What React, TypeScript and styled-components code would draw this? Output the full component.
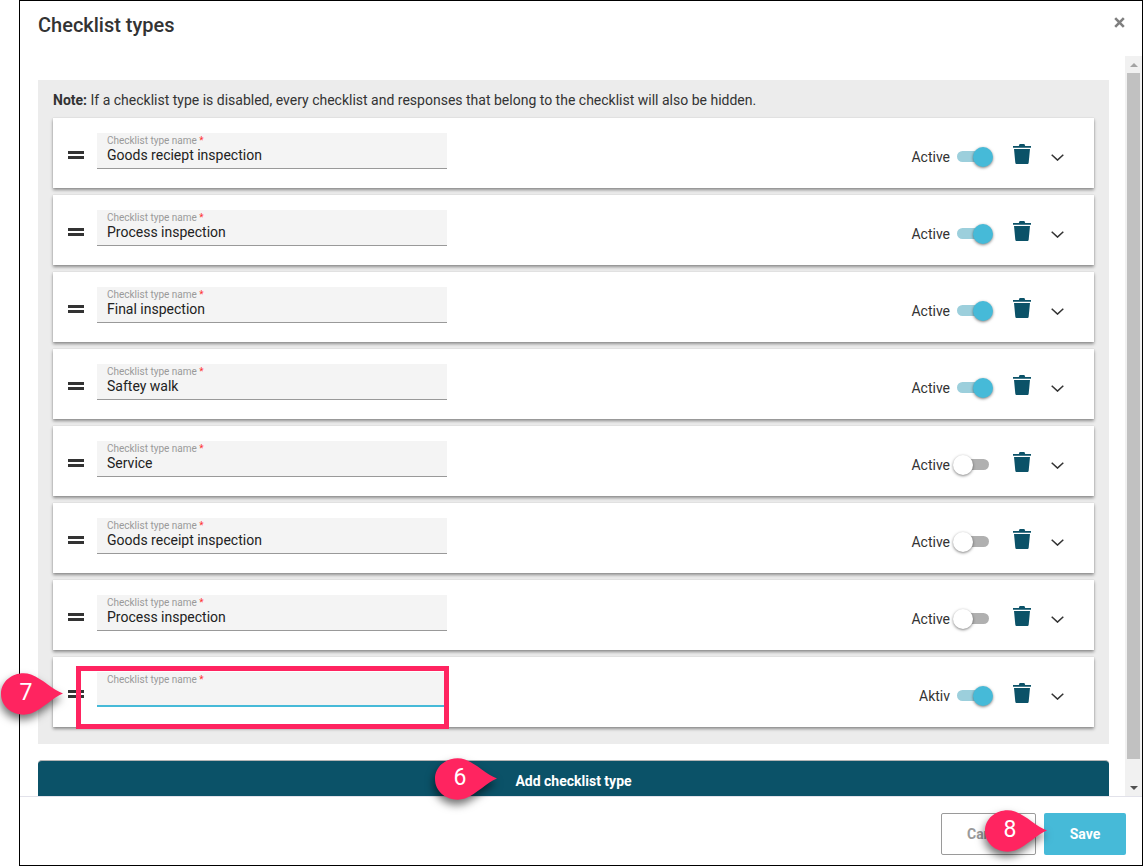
import React from "react";
import styled, { createGlobalStyle } from "styled-components";

const Global = createGlobalStyle`
  html, body { margin: 0; padding: 0; background: #fff; }
  body { font-family: Roboto, "Liberation Sans", sans-serif; color: #333; }
  * { box-sizing: border-box; }
`;

const Page = styled.div`
  position: relative;
  width: 1144px;
  height: 866px;
  padding-left: 19px;
  padding-right: 1px;
  overflow: hidden;
`;

const Modal = styled.div`
  width: 1124px;
  height: 866px;
  border: 1px solid #000;
  background: #fff;
  display: flex;
  flex-direction: column;
`;

const Header = styled.header`
  height: 55px;
  flex: none;
  display: flex;
  justify-content: space-between;
  padding: 11px 17px 0 18px;
`;

const Title = styled.h2`
  margin: 0;
  font-size: 20px;
  line-height: 26px;
  font-weight: 500;
  color: #333;
`;

const CloseButton = styled.button`
  width: 11px;
  height: 11px;
  margin-top: 5px;
  padding: 0;
  border: 0;
  background: none;
  display: flex;
`;

const Middle = styled.div`
  height: 740px;
  flex: none;
  display: flex;
  overflow: hidden;
`;

const Content = styled.main`
  width: 1105px;
  flex: none;
  padding: 24px 16px 0 18px;
`;

const Panel = styled.section`
  background: #ececec;
  padding: 12px 15px 17px;
`;

const Note = styled.p`
  margin: 0 0 9px;
  font-size: 14px;
  line-height: 17px;
  color: #333;
  b { font-weight: 700; }
`;

const List = styled.div`
  display: flex;
  flex-direction: column;
  gap: 7px;
`;

const Card = styled.article`
  height: 70px;
  background: #fff;
  box-shadow: 0 2px 3px rgba(0, 0, 0, 0.4), 0 0 1px rgba(0, 0, 0, 0.15);
  display: flex;
  padding: 15px 30px 0 15px;
`;

const Drag = styled.div`
  width: 16px;
  height: 8px;
  margin: 18px 13px 0 0;
  flex: none;
  border-top: 3px solid #333;
  border-bottom: 3px solid #333;
`;

const Field = styled.div<{ $focused?: boolean }>`
  width: 350px;
  height: ${(p) => (p.$focused ? "35px" : "36px")};
  padding: 3px 10px 0;
  background: #f4f4f4;
  border-bottom: ${(p) => (p.$focused ? "2px solid #46bad8" : "1px solid #999")};
`;

const FieldLabel = styled.div`
  font-size: 10px;
  line-height: 10px;
  color: #9a9a9a;
  span { color: #f33; }
`;

const FieldValue = styled.div`
  font-size: 14px;
  line-height: 18px;
  color: #222;
`;

const Actions = styled.div`
  margin-left: auto;
  height: 36px;
  display: flex;
  align-items: center;
  padding-top: 12px;
`;

const ActiveLabel = styled.span`
  font-size: 14px;
  color: #333;
  margin-right: 7px;
`;

const Toggle = styled.div<{ $on: boolean }>`
  position: relative;
  width: 32px;
  height: 11px;
  border-radius: 6px;
  margin-top: -2px;
  background: ${(p) => (p.$on ? "#9ccfdc" : "#b0b0b0")};
  &::after {
    content: "";
    position: absolute;
    top: -4px;
    left: ${(p) => (p.$on ? "16px" : "-4px")};
    width: 20px;
    height: 20px;
    border-radius: 50%;
    background: ${(p) => (p.$on ? "#46bad8" : "#fff")};
    box-shadow: 0 1px 3px rgba(0, 0, 0, 0.5);
  }
`;

const Trash = styled.svg`
  width: 18px;
  height: 20px;
  margin: -6px 0 0 24px;
`;

const Chevron = styled.svg`
  width: 13px;
  height: 7px;
  margin: 0 0 0 20px;
`;

const AddButton = styled.button`
  display: block;
  width: 100%;
  height: 41px;
  margin-top: 16px;
  border: 0;
  border-top: 1px solid #b5b5b5;
  border-radius: 4px;
  background: #0b5268;
  color: #fff;
  font: 700 14px Roboto, "Liberation Sans", sans-serif;
`;

const Scrollbar = styled.div`
  width: 17px;
  flex: none;
  background: #f1f1f1;
  display: flex;
  flex-direction: column;
  align-items: center;
`;

const ScrollArrow = styled.div<{ $up?: boolean }>`
  height: 17px;
  flex: none;
  display: flex;
  align-items: center;
  justify-content: center;
  &::before {
    content: "";
    border-left: 4px solid transparent;
    border-right: 4px solid transparent;
    ${(p) => (p.$up ? "border-bottom: 4px solid #a3a3a3;" : "border-top: 4px solid #505050;")}
  }
`;

const ScrollThumb = styled.div`
  width: 13px;
  height: 686px;
  background: #c1c1c1;
  margin-bottom: 20px;
`;

const Footer = styled.footer`
  flex: 1;
  border-top: 1px solid #e2e2ea;
  background: #fff;
  display: flex;
  justify-content: flex-end;
  gap: 8px;
  padding: 16px 16px 0 0;
`;

const FooterButton = styled.button<{ $primary?: boolean }>`
  width: ${(p) => (p.$primary ? "82px" : "95px")};
  height: 42px;
  border-radius: 2px;
  border: ${(p) => (p.$primary ? "0" : "1px solid #9a9a9a")};
  background: ${(p) => (p.$primary ? "#46bad8" : "#fff")};
  color: ${(p) => (p.$primary ? "#fff" : "#9a9a9a")};
  font: 700 14px Roboto, "Liberation Sans", sans-serif;
`;

const Highlight = styled.div`
  position: absolute;
  left: 76px;
  top: 666px;
  width: 373px;
  height: 63px;
  border: 5px solid #ff2460;
`;

const Callout = styled.div<{ $x: number; $y: number }>`
  position: absolute;
  left: ${(p) => p.$x}px;
  top: ${(p) => p.$y}px;
  width: 63px;
  height: 42px;
  svg {
    display: block;
    overflow: visible;
    filter: drop-shadow(-1px 5px 4px rgba(0, 0, 0, 0.55));
  }
`;

const CalloutNumber = styled.span`
  position: absolute;
  left: 15px;
  top: 0;
  width: 20px;
  text-align: center;
  color: #fff;
  font-size: 23px;
  line-height: 40px;
`;

const rows = [
  { name: "Goods reciept inspection", on: true, label: "Active" },
  { name: "Process inspection", on: true, label: "Active" },
  { name: "Final inspection", on: true, label: "Active" },
  { name: "Saftey walk", on: true, label: "Active" },
  { name: "Service", on: false, label: "Active" },
  { name: "Goods receipt inspection", on: false, label: "Active" },
  { name: "Process inspection", on: false, label: "Active" },
  { name: "", on: true, label: "Aktiv", focused: true },
];

const callouts = [
  { n: 7, x: 1, y: 673 },
  { n: 6, x: 435, y: 758 },
  { n: 8, x: 985, y: 810 },
];

export default function App() {
  return (
    <Page>
      <Global />
      <Modal>
        <Header>
          <Title>Checklist types</Title>
          <CloseButton aria-label="Close">
            <svg width="11" height="11" viewBox="0 0 11 11">
              <path d="M1.2 1.2l8.6 8.6M9.8 1.2L1.2 9.8" stroke="#7f7f7f" strokeWidth="2.6" fill="none" />
            </svg>
          </CloseButton>
        </Header>
        <Middle>
          <Content>
            <Panel>
              <Note>
                <b>Note:</b> If a checklist type is disabled, every checklist and responses that belong to the checklist will also be hidden.
              </Note>
              <List>
                {rows.map((r, i) => (
                  <Card key={i}>
                    <Drag />
                    <Field $focused={r.focused}>
                      <FieldLabel>
                        Checklist type name <span>*</span>
                      </FieldLabel>
                      <FieldValue>{r.name}</FieldValue>
                    </Field>
                    <Actions>
                      <ActiveLabel>{r.label}</ActiveLabel>
                      <Toggle $on={r.on} />
                      <Trash viewBox="0 0 18 20">
                        <path d="M0 2h18v1.700H0zM5.800 2l.8-2h4.800l.8 2z" fill="#0b5268" />
                        <path d="M1 5h16l-1.300 13.400c-.1.900-.7 1.600-1.500 1.600H3.800c-.8 0-1.400-.7-1.500-1.600z" fill="#0b5268" />
                      </Trash>
                      <Chevron viewBox="0 0 13 7">
                        <path d="M.7.7l5.800 5.400L12.300.7" stroke="#333" strokeWidth="1.500" fill="none" />
                      </Chevron>
                    </Actions>
                  </Card>
                ))}
              </List>
            </Panel>
            <AddButton>Add checklist type</AddButton>
          </Content>
          <Scrollbar>
            <ScrollArrow $up />
            <ScrollThumb />
            <ScrollArrow />
          </Scrollbar>
        </Middle>
        <Footer>
          <FooterButton>Cancel</FooterButton>
          <FooterButton $primary>Save</FooterButton>
        </Footer>
      </Modal>
      <Highlight />
      {callouts.map((c) => (
        <Callout key={c.n} $x={c.x} $y={c.y}>
          <svg width="63" height="42" viewBox="0 0 63 42">
            <path d="M62 20.500C52 17 42 6 30 1.500 16-3 0 6 0 21s16 24 30 19.500C42 36 52 24 62 20.500z" fill="#ff2460" />
          </svg>
          <CalloutNumber>{c.n}</CalloutNumber>
        </Callout>
      ))}
    </Page>
  );
}
